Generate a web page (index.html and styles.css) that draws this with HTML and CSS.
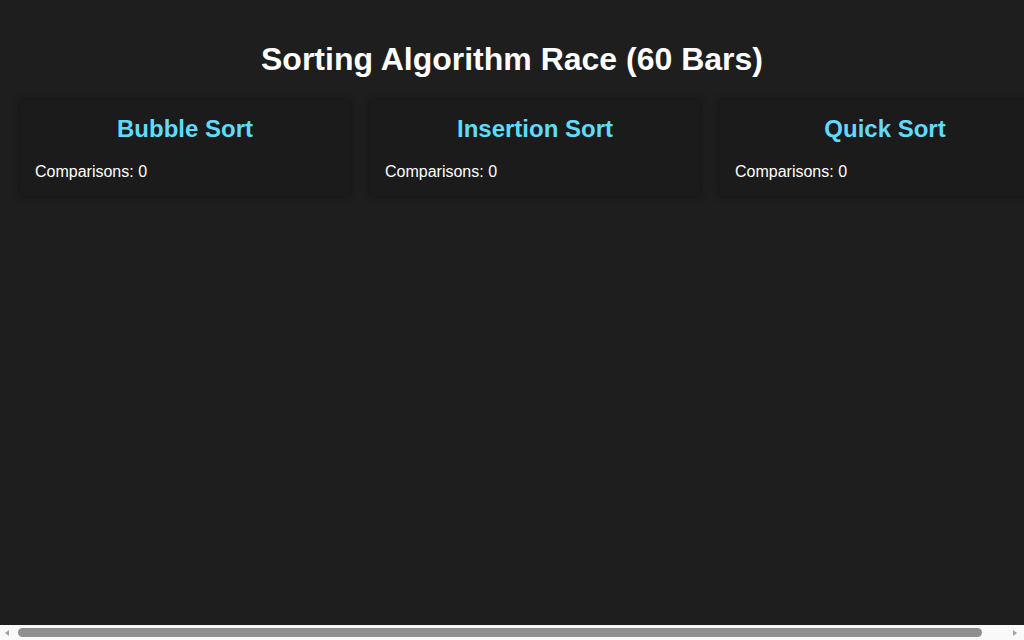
FILE: index.html
```html
<!DOCTYPE html>
<html lang="en">
<head>
<meta charset="utf-8">
<title>Sorting Algorithm Race</title>
<link rel="stylesheet" href="styles.css">
</head>
<body>
<div class="page">
  <h1 class="title">Sorting Algorithm Race (60 Bars)</h1>
  <div class="race">
    <div class="card">
      <h2 class="card-title">Bubble Sort</h2>
      <div class="stats">Comparisons: 0</div>
      <div class="bars"></div>
    </div>
    <div class="card">
      <h2 class="card-title">Insertion Sort</h2>
      <div class="stats">Comparisons: 0</div>
      <div class="bars"></div>
    </div>
    <div class="card">
      <h2 class="card-title">Quick Sort</h2>
      <div class="stats">Comparisons: 0</div>
      <div class="bars"></div>
    </div>
  </div>
</div>
<div class="hscroll" aria-hidden="true">
  <span class="arrow arrow-left"></span>
  <span class="thumb-track"><span class="thumb"></span></span>
  <span class="arrow arrow-right"></span>
</div>
</body>
</html>
```
FILE: styles.css
```css
html, body {
  margin: 0;
  padding: 0;
  background: #1e1e1e;
  overflow: hidden;
}
body {
  font-family: "Liberation Sans", Arial, sans-serif;
  color: #ffffff;
}
.page {
  box-sizing: border-box;
  height: 100vh;
  width: 100vw;
  padding: 20px 0 0 10px;
  overflow: hidden;
}
.title {
  text-align: center;
  font-size: 32px;
  font-weight: bold;
  margin: 21.44px 0 21.44px;
  color: #ffffff;
  width: 1004px;
}
.race {
  display: flex;
  flex-wrap: nowrap;
  width: max-content;
}
.card {
  flex: 0 0 auto;
  box-sizing: border-box;
  width: 330px;
  margin: 0 10px;
  padding: 15px;
  background: #1b1b1b;
  box-shadow: 0 0 8px rgba(0, 0, 0, 0.35);
}
.card-title {
  margin: 0 0 19.92px;
  font-size: 24px;
  font-weight: bold;
  text-align: center;
  color: #61dafb;
}
.stats {
  font-size: 16px;
  color: #ffffff;
}
.bars {
  height: 0;
}

/* horizontal scrollbar overlay */
.hscroll {
  position: fixed;
  left: 0;
  right: 0;
  bottom: 0;
  height: 15px;
  background: #f9f9f9;
  display: flex;
  align-items: center;
  padding: 0 7px 0 5px;
  box-sizing: border-box;
}
.arrow {
  width: 0;
  height: 0;
  border-top: 3.5px solid transparent;
  border-bottom: 3.5px solid transparent;
  flex: 0 0 auto;
}
.arrow-left {
  border-right: 4px solid #a3a3a3;
}
.arrow-right {
  border-left: 4px solid #a3a3a3;
}
.thumb-track {
  flex: 1 1 auto;
  display: flex;
  padding: 0 30px 0 9px;
}
.thumb {
  display: block;
  height: 9px;
  width: 964px;
  border-radius: 5px;
  background: #8f8f8f;
}
```
